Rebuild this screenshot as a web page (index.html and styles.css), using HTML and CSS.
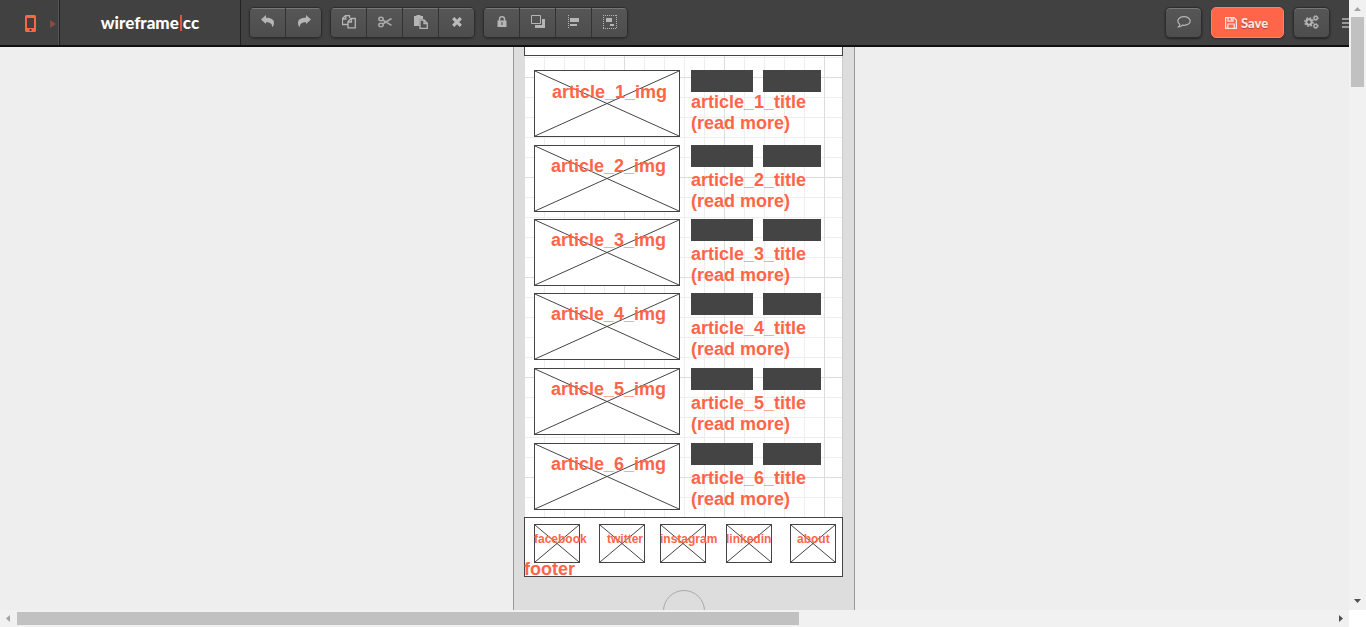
FILE: index.html
```html
<!DOCTYPE html>
<html lang="en">
<head>
<meta charset="utf-8">
<title>wireframe.cc</title>
<link rel="stylesheet" href="styles.css">
</head>
<body>
<svg class="defs" aria-hidden="true">
  <symbol id="cross" viewBox="0 0 100 100" preserveAspectRatio="none">
    <path d="M0 0L100 100M100 0L0 100" fill="none" stroke="#444" stroke-width="1" vector-effect="non-scaling-stroke"/>
  </symbol>
</svg>
<div class="app">
  <div class="page">
    <header class="topbar">
      <button class="device-switch" aria-label="Device">
        <svg width="11" height="18" viewBox="0 0 11 18"><path fill="#ff6549" fill-rule="evenodd" d="M1.500 0h8Q11 0 11 1.500v14Q11 17 9.500 17h-8Q0 17 0 15.500v-14Q0 0 1.500 0zM2 3v10h7V3zM4.500 14v2h2v-2z"/></svg>
        <svg width="6" height="8" viewBox="0 0 6 8"><path d="M0 0l6 4-6 4z" fill="#8a4b40"/></svg>
      </button>
      <a class="logo" href="#">wireframe<span class="logo-bar"></span>cc</a>
      <div class="tools">
        <div class="group">
          <button aria-label="Undo"><svg width="14" height="13" viewBox="0 0 14 13"><path d="M0 4.500L5 0v2.800c5 0 8 1.400 8 5.200 0 1.700-.8 3.300-2 4.300.5-3.600-1.700-5.100-6-5.100V9z"/></svg></button>
          <button aria-label="Redo"><svg width="14" height="13" viewBox="0 0 14 13"><path d="M14 4.500L9 0v2.800C4 2.800 1 4.200 1 8c0 1.700.8 3.300 2 4.300C2.500 8.700 4.700 7.200 9 7.200V9z"/></svg></button>
        </div>
        <div class="group">
          <button aria-label="Copy"><svg width="14" height="14" viewBox="0 0 14 14"><g fill="none" stroke="#b5b5b5" stroke-width="1.300"><path d="M5.500 9.500h-5v-6L3.500.6h4v2.500M.8 4h3V1M6 12.800V6.500l3-3h4.300v9.300zM6 7h3.400V3.700"/></g></svg></button>
          <button aria-label="Cut"><svg width="14" height="12" viewBox="0 0 14 12"><g fill="none" stroke="#aaa" stroke-width="1.500"><ellipse cx="3" cy="3" rx="2.200" ry="1.700"/><ellipse cx="3" cy="9" rx="2.200" ry="1.700"/><path d="M4.800 4l8.700 5.300M4.800 8l8.700-5.500"/></g></svg></button>
          <button aria-label="Paste"><svg width="14" height="14" viewBox="0 0 14 14"><path d="M0 1h2.500V0h4v1H9v3H5.500v7H0z"/><path d="M6 5h4l3.300 3.200v5.100H6zM10 5v3.500h3.300" fill="#525252" stroke="#b5b5b5" stroke-width="1.300"/></svg></button>
          <button aria-label="Delete"><svg width="10" height="10" viewBox="0 0 10 10"><path d="M1.200 1.200l7.600 7.600m0-7.600L1.200 8.800" fill="none" stroke="#bbb" stroke-width="3.200"/></svg></button>
        </div>
        <div class="group">
          <button aria-label="Lock"><svg width="10" height="11" viewBox="0 0 10 11"><path fill-rule="evenodd" d="M.5 4.500h9V11h-9zM4.500 6v3h1V6z"/><path d="M2.500 5V3a2.500 2.200 0 015 0v2" fill="none" stroke="#b5b5b5" stroke-width="1.500"/></svg></button>
          <button aria-label="Arrange"><svg width="14" height="13" viewBox="0 0 14 13"><path d="M11 4h3v9H4v-3h7z"/><path d="M.5.500h9v8h-9z" fill="none" stroke="#b5b5b5"/></svg></button>
          <button aria-label="Align"><svg width="12" height="14" viewBox="0 0 12 14" shape-rendering="crispEdges"><path d="M2 3h9v4H2zM2 9h7v2H2z"/><path d="M.5 0v14" stroke="#b5b5b5" stroke-dasharray="1 1"/></svg></button>
          <button aria-label="Group"><svg width="14" height="14" viewBox="0 0 14 14" shape-rendering="crispEdges"><path d="M3 3h6v4H3zM7 9h4v2H7z"/><path d="M0 .5h14M0 13.500h14M.5 0v14M13.500 0v14" fill="none" stroke="#b5b5b5" stroke-dasharray="1 1"/></svg></button>
        </div>
      </div>
      <div class="actions">
        <button class="single" aria-label="Comments"><svg width="14" height="12" viewBox="0 0 14 12"><path d="M7 .7c3.500 0 6.200 1.900 6.200 4.300S10.500 9.300 7 9.300c-.6 0-1.100 0-1.600-.2C4.300 10.400 3 11 1.500 11c.7-.7 1.200-1.500 1.300-2.700C1.500 7.500.8 6.300.8 5 .8 2.600 3.500.7 7 .7z" fill="none" stroke="#b5b5b5" stroke-width="1.200"/></svg></button>
        <button class="save"><svg width="12" height="12" viewBox="0 0 12 12"><path d="M.6.600h8.300l2.500 2.500v8.300H.6zM3 .6v3.600h5V.6M2.800 11.400V7h6.400v4.400" fill="none" stroke="#ffe5e0" stroke-width="1.200"/><path d="M5.700 1h1.600v2.500H5.700z" fill="#ffe5e0"/></svg>Save</button>
        <button class="single" aria-label="Settings"><svg width="15" height="14" viewBox="0 0 15 14"><g fill="none" stroke="#b5b5b5"><circle cx="5" cy="7" r="2.700" stroke-width="2"/><circle cx="5" cy="7" r="4.200" stroke-width="1.400" stroke-dasharray="1.700 1.600"/><circle cx="11.700" cy="3" r="1.700" stroke-width="1.300"/><circle cx="11.700" cy="3" r="2.500" stroke-dasharray="1 1"/><circle cx="11.700" cy="11" r="1.700" stroke-width="1.300"/><circle cx="11.700" cy="11" r="2.500" stroke-dasharray="1 1"/></g></svg></button>
        <button class="menu" aria-label="Menu"><svg width="14" height="10" viewBox="0 0 14 10"><path d="M0 0h14v2H0zM0 4h14v2H0zM0 8h14v2H0z" fill="#999"/></svg></button>
      </div>
    </header>
    <main class="workspace">
      <div class="phone">
        <div class="canvas">
          <div class="node top-box"></div>
          <div class="node article article-1">
            <div class="image"><svg><use href="#cross"/></svg><span>article_1_img</span></div>
            <div class="info"><div class="bars"><i></i><i></i></div><p>article_1_title<br>(read more)</p></div>
          </div>
          <div class="node article article-2">
            <div class="image"><svg><use href="#cross"/></svg><span>article_2_img</span></div>
            <div class="info"><div class="bars"><i></i><i></i></div><p>article_2_title<br>(read more)</p></div>
          </div>
          <div class="node article article-3">
            <div class="image"><svg><use href="#cross"/></svg><span>article_3_img</span></div>
            <div class="info"><div class="bars"><i></i><i></i></div><p>article_3_title<br>(read more)</p></div>
          </div>
          <div class="node article article-4">
            <div class="image"><svg><use href="#cross"/></svg><span>article_4_img</span></div>
            <div class="info"><div class="bars"><i></i><i></i></div><p>article_4_title<br>(read more)</p></div>
          </div>
          <div class="node article article-5">
            <div class="image"><svg><use href="#cross"/></svg><span>article_5_img</span></div>
            <div class="info"><div class="bars"><i></i><i></i></div><p>article_5_title<br>(read more)</p></div>
          </div>
          <div class="node article article-6">
            <div class="image"><svg><use href="#cross"/></svg><span>article_6_img</span></div>
            <div class="info"><div class="bars"><i></i><i></i></div><p>article_6_title<br>(read more)</p></div>
          </div>
          <div class="node footer">
            <div class="node social facebook"><svg><use href="#cross"/></svg><span>facebook</span></div>
            <div class="node social twitter"><svg><use href="#cross"/></svg><span>twitter</span></div>
            <div class="node social instagram"><svg><use href="#cross"/></svg><span>instagram</span></div>
            <div class="node social linkedin"><svg><use href="#cross"/></svg><span>linkedin</span></div>
            <div class="node social about"><svg><use href="#cross"/></svg><span>about</span></div>
            <div class="node footer-label">footer</div>
          </div>
        </div>
        <div class="home"></div>
      </div>
    </main>
  </div>
  <div class="scroll vertical">
    <svg width="17" height="17"><path d="M5 11h7L8.500 7z" fill="#a3a3a3"/></svg>
    <div class="track"><div class="thumb"></div></div>
    <svg width="17" height="17"><path d="M5 6h7l-3.500 4z" fill="#505050"/></svg>
  </div>
  <div class="scroll horizontal">
    <svg width="17" height="17"><path d="M10 5v7L6 8.500z" fill="#a3a3a3"/></svg>
    <div class="track"><div class="thumb"></div></div>
    <svg width="17" height="17"><path d="M7 5v7l4-3.500z" fill="#505050"/></svg>
  </div>
</div>
</body>
</html>
```
FILE: styles.css
```css
* { box-sizing: border-box; }
body { margin: 0; background: #fff; font-family: "Liberation Sans", Arial, sans-serif; }
svg { display: block; flex: none; }
button { margin: 0; padding: 0; border: 0; background: none; font: inherit; }
.defs { position: absolute; width: 0; height: 0; }

.app {
  display: grid;
  grid-template: minmax(0, 1fr) 17px / minmax(0, 1fr) 17px;
  height: 100vh;
  overflow: hidden;
}
.page { display: flex; flex-direction: column; overflow: hidden; background: #eee; }

/* Top bar */
.topbar {
  position: relative;
  z-index: 1;
  display: flex;
  flex: none;
  height: 47px;
  background: #414141;
  border-bottom: 2px solid #111;
}
.device-switch {
  display: flex;
  align-items: center;
  gap: 14px;
  width: 60px;
  padding: 2px 0 0 25px;
  border-right: 1px solid #222;
  box-shadow: inset -1px 0 #555;
}
.logo {
  display: flex;
  align-items: center;
  justify-content: center;
  width: 181px;
  border-right: 1px solid #222;
  color: #fff;
  font: 900 17px/24px Lato, sans-serif;
  text-decoration: none;
}
.logo-bar { width: 2px; height: 16px; margin: 0 1px; background: #d9573f; }
.tools { display: flex; align-items: center; gap: 8px; padding-left: 8px; }
.group, .single, .save {
  height: 31px;
  border: 1px solid #2d2d2d;
  border-radius: 5px;
  box-shadow: 0 1px 2px #2229;
}
.group { display: flex; overflow: hidden; }
.group button, .single {
  display: flex;
  align-items: center;
  justify-content: center;
  padding-bottom: 2px;
  background: linear-gradient(#565656, #4d4d4d);
}
.group button { width: 35px; box-shadow: inset 0 1px #777; }
.group button + button { width: 36px; border-left: 1px solid #333; }
.group svg { fill: #b5b5b5; }
.actions { display: flex; align-items: center; gap: 9px; margin-left: auto; }
.single { width: 37px; box-shadow: inset 0 1px #777, 0 1px 2px #222; }
.save {
  display: flex;
  align-items: center;
  justify-content: center;
  gap: 4px;
  width: 73px;
  padding-right: 2px;
  border-color: #ff806a;
  background: #ff6549;
  color: #ffe5e0;
  font: 900 13px/20px Lato, sans-serif;
  text-shadow: 0 1px 1px #a43;
}
.menu { width: 7px; margin-left: 3px; overflow: hidden; }

/* Drawing area; the sheet is wider than the visible page */
.workspace {
  display: flex;
  flex: 1;
  justify-content: center;
  width: calc(100% + 19px);
  min-height: 0;
}
.phone {
  position: relative;
  width: 342px;
  padding: 0 11px 0 10px;
  overflow: hidden;
  border: solid #999;
  border-width: 0 1px;
  background: #ddd;
}
.canvas {
  position: relative;
  height: 530px;
  border-right: 1px solid #ccc;
  background-color: #fff;
  background-image:
    linear-gradient(90deg, #ddd 1px, transparent 1px),
    linear-gradient(#ddd 1px, transparent 1px),
    linear-gradient(90deg, #eee 1px, transparent 1px),
    linear-gradient(#eee 1px, transparent 1px);
  background-size: 100px 100px, 100px 100px, 20px 20px, 20px 20px;
  background-position: 0 0, 0 30px, 0 0, 0 10px;
  color: #ff6549;
  font-weight: bold;
  font-size: 18px;
  line-height: 21px;
}
.node { position: absolute; }
.top-box { top: -40px; left: 0; width: 319px; height: 49px; border: 1px solid #444; background: #fff; }

.article { left: 10px; display: flex; gap: 11px; }
.article-1 { top: 23px; }
.article-2 { top: 98px; }
.article-3 { top: 172px; }
.article-4 { top: 246px; }
.article-5 { top: 321px; }
.article-6 { top: 396px; }
.image {
  display: grid;
  width: 146px;
  height: 67px;
  border: 1px solid #444;
  background: #fff;
}
.image svg, .image span { grid-area: 1 / 1; }
.image svg { width: 100%; height: 100%; }
.image span { z-index: 1; padding: 10px 0 0 16px; }
.article-1 .image span { padding: 11px 0 0 17px; }
.bars { display: grid; grid-template-columns: 62px 58px; gap: 10px; }
.bars i { height: 22px; background: #444; }
.info p { margin: 3px 0 0; }
.article-1 .info p { margin-top: 0; }

.footer { top: 470px; left: 0; width: 319px; height: 60px; border: 1px solid #444; background: #fff; }
.social {
  top: 6px;
  width: 46px;
  height: 39px;
  display: grid;
  grid-template: 100% / 100%;
  border: 1px solid #444;
  font-size: 12px;
  line-height: 14px;
}
.social svg, .social span { grid-area: 1 / 1; }
.social svg { width: 100%; height: 100%; }
.social span { z-index: 1; margin: 7px 0 0 -1px; white-space: nowrap; }
.facebook { left: 9px; }
.twitter { left: 74px; }
.instagram { left: 135px; }
.linkedin { left: 201px; }
.about { left: 265px; }
.twitter span { margin-left: 7px; }
.about span { margin-left: 6px; }
.footer-label { top: 41px; left: -1px; }
.home { width: 42px; height: 42px; margin: 13px auto 0; border: 1px solid #aaa; border-radius: 50%; }

/* Scroll bars */
.scroll { display: flex; background: #f1f1f1; }
.track { flex: 1; }
.thumb { background: #c1c1c1; }
.vertical { flex-direction: column; }
.vertical .track { padding: 0 2px; }
.vertical .thumb { height: 70px; }
.horizontal .track { padding: 2px 0; }
.horizontal .thumb { width: 782px; height: 13px; }
```
